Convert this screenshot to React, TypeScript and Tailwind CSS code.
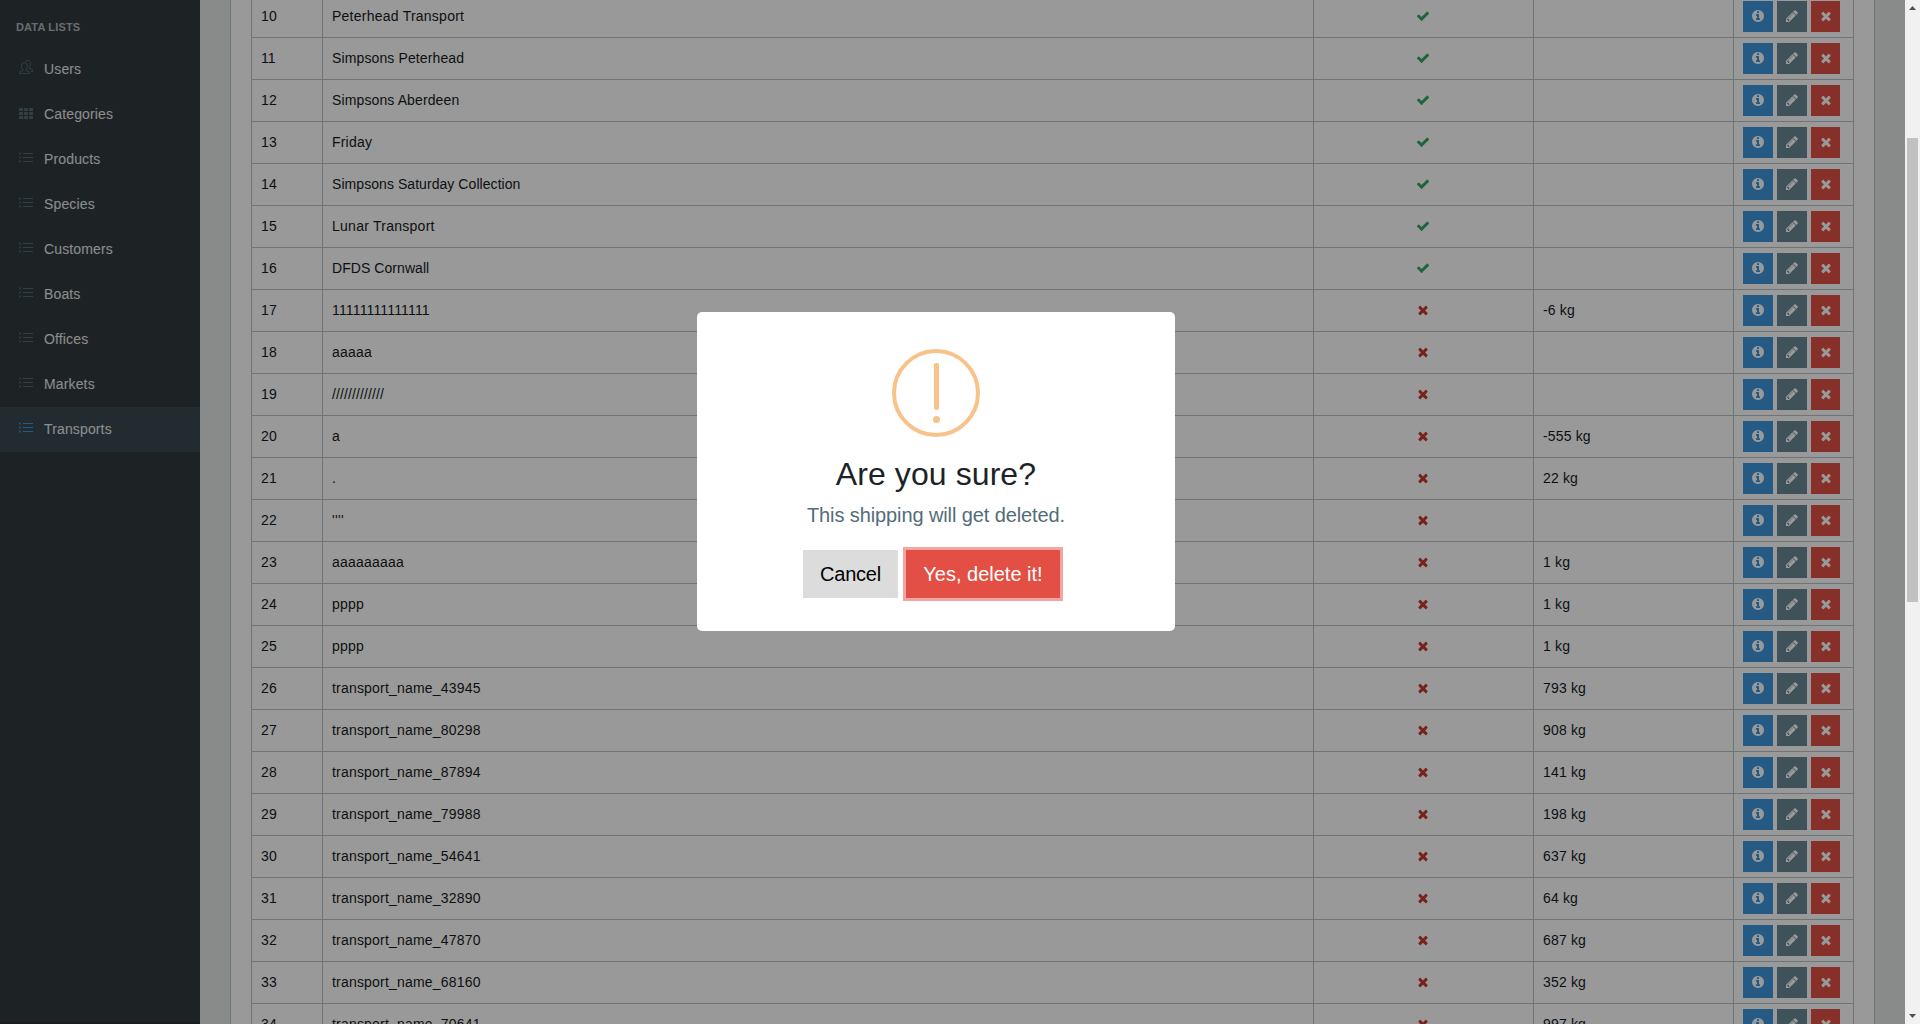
import type { ReactNode } from "react";
import { SlPeople } from "react-icons/sl";

const INFO =
  "M1152 1376v-160q0-14-9-23t-23-9h-96v-512q0-14-9-23t-23-9h-320q-14 0-23 9t-9 23v160q0 14 9 23t23 9h96v320h-96q-14 0-23 9t-9 23v160q0 14 9 23t23 9h448q14 0 23-9t9-23zm-128-896v-160q0-14-9-23t-23-9h-192q-14 0-23 9t-9 23v160q0 14 9 23t23 9h192q14 0 23-9t9-23zm640 416q0 209-103 385.5t-279.5 279.5-385.5 103-385.5-103-279.5-279.5-103-385.5 103-385.5 279.5-279.5 385.5-103 385.5 103 279.5 279.5 103 385.5z";
const PENCIL =
  "M491 1536l91-91-235-235-91 91v107h128v128h107zm523-928q0-22-22-22-10 0-17 7l-542 542q-7 7-7 17 0 22 22 22 10 0 17-7l542-542q7-7 7-17zm-54-192l416 416-832 832h-416v-416zm683 96q0 53-37 90l-166 166-416-416 166-165q36-38 90-38 53 0 91 38l235 234q37 39 37 91z";
const TIMES =
  "M1490 1322q0 40-28 68l-136 136q-28 28-68 28t-68-28l-294-294-294 294q-28 28-68 28t-68-28l-136-136q-28-28-28-68t28-68l294-294-294-294q-28-28-28-68t28-68l136-136q28-28 68-28t68 28l294 294 294-294q28-28 68-28t68 28l136 136q28 28 28 68t-28 68l-294 294 294 294q28 28 28 68z";
const CHECK =
  "M1671 566q0 40-28 68l-724 724-136 136q-28 28-68 28t-68-28l-136-136-362-362q-28-28-28-68t28-68l136-136q28-28 68-28t68 28l294 295 656-657q28-28 68-28t68 28l136 136q28 28 28 68z";

function Glyph({ d, className = "" }: { d: string; className?: string }) {
  return (
    <svg viewBox="0 0 1792 1792" fill="currentColor" className={`size-3.5 shrink-0 ${className}`}>
      <path d={d} />
    </svg>
  );
}

function ListIcon() {
  return (
    <svg viewBox="0 0 14 14" fill="currentColor" className="size-3.5">
      {[3, 7, 11].map((y) => (
        <g key={y}>
          <rect x="0" y={y - 0.5} width="2" height="2" opacity="0.7" />
          <rect x="4" y={y} width="10" height="1" />
        </g>
      ))}
    </svg>
  );
}

function GridIcon() {
  return (
    <svg viewBox="0 0 14 14" fill="currentColor" className="size-3.5">
      {[3, 7, 11].map((y) =>
        [0, 5, 10].map((x) => <rect key={`${x}-${y}`} x={x} y={y} width="4" height="3" rx="0.5" />),
      )}
    </svg>
  );
}

const NAV: { label: string; icon: ReactNode; active?: boolean }[] = [
  { label: "Users", icon: <SlPeople className="size-3.5" /> },
  { label: "Categories", icon: <GridIcon /> },
  { label: "Products", icon: <ListIcon /> },
  { label: "Species", icon: <ListIcon /> },
  { label: "Customers", icon: <ListIcon /> },
  { label: "Boats", icon: <ListIcon /> },
  { label: "Offices", icon: <ListIcon /> },
  { label: "Markets", icon: <ListIcon /> },
  { label: "Transports", icon: <ListIcon />, active: true },
];

const WIDE = "tracking-[0.2px]";
const MID = "tracking-[0.12px]";
const SLIM = "tracking-[0.06px]";

const ROWS: [number, string, boolean, string, string][] = [
  [10, "Peterhead Transport", true, "", "tracking-[0.24px]"],
  [11, "Simpsons Peterhead", true, "", MID],
  [12, "Simpsons Aberdeen", true, "", MID],
  [13, "Friday", true, "", WIDE],
  [14, "Simpsons Saturday Collection", true, "", SLIM],
  [15, "Lunar Transport", true, "", "tracking-[0.26px]"],
  [16, "DFDS Cornwall", true, "", SLIM],
  [17, "11111111111111", false, "-6 kg", "tracking-[0.16px]"],
  [18, "aaaaa", false, "", WIDE],
  [19, "/////////////", false, "", MID],
  [20, "a", false, "-555 kg", WIDE],
  [21, ".", false, "22 kg", WIDE],
  [22, "''''", false, "", "tracking-[0.33px]"],
  [23, "aaaaaaaaa", false, "1 kg", WIDE],
  [24, "pppp", false, "1 kg", WIDE],
  [25, "pppp", false, "1 kg", WIDE],
  [26, "transport_name_43945", false, "793 kg", WIDE],
  [27, "transport_name_80298", false, "908 kg", WIDE],
  [28, "transport_name_87894", false, "141 kg", WIDE],
  [29, "transport_name_79988", false, "198 kg", WIDE],
  [30, "transport_name_54641", false, "637 kg", WIDE],
  [31, "transport_name_32890", false, "64 kg", WIDE],
  [32, "transport_name_47870", false, "687 kg", WIDE],
  [33, "transport_name_68160", false, "352 kg", WIDE],
  [34, "transport_name_70641", false, "997 kg", WIDE],
];

function Sidebar() {
  return (
    <nav className="w-50 shrink-0 border-b-2 border-[#302f35] bg-[#313a3f]">
      <div className="px-4 pt-[18px] pb-[10px] text-[11px] leading-[19px] font-bold tracking-[0.15px] text-[#d1d7da]/80">
        DATA LISTS
      </div>
      {NAV.map(({ label, icon, active }) => (
        <a
          key={label}
          className={`flex h-[45px] items-center px-4 pb-px text-sm tracking-[0.14px] text-white/90 ${active ? "bg-[#394950]" : ""}`}
        >
          <span className={`mr-2 mb-1 flex w-5 justify-center ${active ? "text-[#3c97db]" : "text-[#536c79]"}`}>
            {icon}
          </span>
          {label}
        </a>
      ))}
    </nav>
  );
}

function Table() {
  return (
    <table className="-mt-[5px] w-[1603px] table-fixed border-collapse text-sm text-[#151b1e]">
      <colgroup>
        <col className="w-[71px]" />
        <col className="w-[991px]" />
        <col className="w-[220px]" />
        <col className="w-[200px]" />
        <col className="w-[120px]" />
      </colgroup>
      <tbody>
        {ROWS.map(([id, name, ok, weight, tracking]) => (
          <tr
            key={id}
            className="h-[42px] [&>td]:border [&>td]:border-[#b6c3ca] [&>td]:px-[9px] [&>td]:pt-0 [&>td]:pb-0.5 [&>td:last-child]:pb-0"
          >
            <td className="tracking-[0.12px]">{id}</td>
            <td className={tracking}>{name}</td>
            <td>
              <div className="flex justify-center pr-px">
                <Glyph d={ok ? CHECK : TIMES} className={ok ? "text-[#32a868]" : "text-[#c83a32]"} />
              </div>
            </td>
            <td className="tracking-[0.16px]">{weight}</td>
            <td>
              <div className="flex gap-1 text-white">
                <button className="flex h-[31px] w-[30px] items-center justify-center bg-[#3c97db] pb-px">
                  <Glyph d={INFO} />
                </button>
                <button className="flex h-[31px] w-[30px] items-center justify-center bg-[#698794] pb-px">
                  <Glyph d={PENCIL} />
                </button>
                <button className="flex h-[31px] w-[29px] items-center justify-center bg-[#e24f45] pb-px">
                  <Glyph d={TIMES} />
                </button>
              </div>
            </td>
          </tr>
        ))}
      </tbody>
    </table>
  );
}

function Dialog() {
  return (
    <div className="flex h-[319px] w-[478px] flex-col items-center rounded-[5px] bg-white pt-[37px]">
      <svg viewBox="0 0 88 88" className="size-22 text-[#f7c389]">
        <circle cx="44" cy="44" r="42" fill="none" stroke="currentColor" strokeWidth="4" />
        <rect x="42" y="14" width="5" height="47" rx="2" fill="currentColor" />
        <circle cx="44.5" cy="70.5" r="3.5" fill="currentColor" />
      </svg>
      <h2 className="mt-[18px] text-[32px] leading-[38px] tracking-[0.08px] text-[#1c2326]">Are you sure?</h2>
      <p className="mt-[7px] text-[20px] leading-[30px] tracking-[-0.1px] text-[#536c79]">
        This shipping will get deleted.
      </p>
      <div className="mt-5 flex gap-2 pr-[9px] text-[20px]">
        <button className="h-12 w-[95px] bg-[#dcdcdc] tracking-[-0.25px] text-black">Cancel</button>
        <button className="h-12 w-[154px] bg-[#e34f44] text-white ring-3 ring-[#f1a7a1]">Yes, delete it!</button>
      </div>
    </div>
  );
}

function Scrollbar() {
  return (
    <div className="flex w-[15px] shrink-0 flex-col bg-[#f1f1f1]">
      <svg viewBox="0 0 15 15" className="size-[15px] text-[#505050]">
        <path d="M4 10h7L7.5 6z" fill="currentColor" />
      </svg>
      <div className="mt-[123px] ml-0.5 h-[464px] w-[11px] bg-[#c1c1c1]" />
      <svg viewBox="0 0 15 15" className="mt-auto size-[15px] text-[#505050]">
        <path d="M4 5h7l-3.500 4z" fill="currentColor" />
      </svg>
    </div>
  );
}

export default function App() {
  return (
    <div className="flex h-[1024px] w-[1920px] overflow-hidden font-['Liberation_Sans',Arial,sans-serif]">
      <div className="relative flex min-w-0 flex-1 overflow-hidden">
        <Sidebar />
        <main className="flex-1 bg-[#e3e8e6] px-[30px]">
          <div className="h-full overflow-hidden border-x border-[#b6c3ca] bg-white pl-5">
            <Table />
          </div>
        </main>
        <div className="absolute inset-0 flex items-start justify-center bg-black/40 pt-[312px] pr-[33px]">
          <Dialog />
        </div>
      </div>
      <Scrollbar />
    </div>
  );
}
